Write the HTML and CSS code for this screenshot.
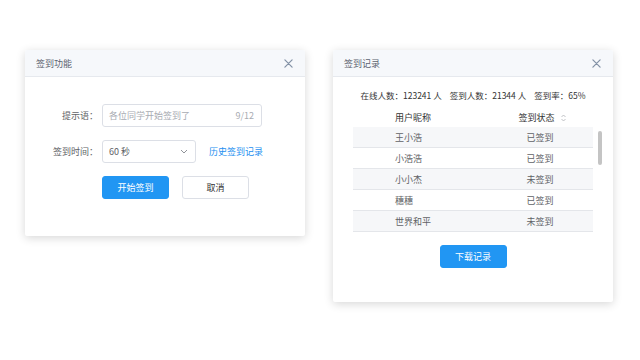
FILE: index.html
```html
<!DOCTYPE html>
<html lang="zh">
<head>
  <meta charset="UTF-8" />
  <title>签到</title>
  <link rel="stylesheet" href="styles.css">
</head>
<body>

  <div class="dialog dialog-sign">
    <div class="dialog-header">
      <span class="dialog-title">签到功能</span>
      <span class="dialog-close">
        <svg width="9" height="9" viewBox="0 0 10 10"><path d="M1 1L9 9M9 1L1 9" stroke="#8594a8" stroke-width="1.4" stroke-linecap="round"/></svg>
      </span>
    </div>
    <div class="dialog-body form">
      <div class="form-row">
        <label class="form-label">提示语：</label>
        <div class="input">
          <span class="placeholder">各位同学开始签到了</span>
          <span class="count">9/12</span>
        </div>
      </div>
      <div class="form-row">
        <label class="form-label">签到时间：</label>
        <div class="select">
          <span>60 秒</span>
          <svg width="8" height="5" viewBox="0 0 8 5"><path d="M1 1L4 4L7 1" fill="none" stroke="#909399" stroke-width="1"/></svg>
        </div>
        <a class="link">历史签到记录</a>
      </div>
      <div class="form-row buttons">
        <span class="form-label"></span>
        <button class="btn btn-primary">开始签到</button>
        <button class="btn btn-default">取消</button>
      </div>
    </div>
  </div>

  <div class="dialog dialog-record">
    <div class="dialog-header">
      <span class="dialog-title">签到记录</span>
      <span class="dialog-close">
        <svg width="9" height="9" viewBox="0 0 10 10"><path d="M1 1L9 9M9 1L1 9" stroke="#8594a8" stroke-width="1.4" stroke-linecap="round"/></svg>
      </span>
    </div>
    <div class="dialog-body record">
      <div class="stats">
        <span>在线人数：123241 人</span>
        <span>签到人数：21344 人</span>
        <span>签到率：65%</span>
      </div>
      <div class="table-wrap">
        <div class="table">
          <div class="tr th">
            <div class="td">用户昵称</div>
            <div class="td status">签到状态
              <svg class="sort" width="5" height="8" viewBox="0 0 5 8"><path d="M0.5 3L2.5 1L4.5 3M0.5 5L2.5 7L4.5 5" fill="none" stroke="#b0b3b8" stroke-width="0.8"/></svg>
            </div>
          </div>
          <div class="tr odd"><div class="td">王小浩</div><div class="td status">已签到</div></div>
          <div class="tr"><div class="td">小浩浩</div><div class="td status">已签到</div></div>
          <div class="tr odd"><div class="td">小小杰</div><div class="td status">未签到</div></div>
          <div class="tr"><div class="td">穗穗</div><div class="td status">已签到</div></div>
          <div class="tr odd"><div class="td">世界和平</div><div class="td status">未签到</div></div>
        </div>
        <div class="scrollbar"></div>
      </div>
      <div class="download">
        <button class="btn btn-primary">下载记录</button>
      </div>
    </div>
  </div>

</body>
</html>
```

FILE: styles.css
```css
html, body {
  margin: 0;
  padding: 0;
  height: 100%;
  background: #fff;
  font-family: "Noto Sans CJK SC", "Noto Sans", sans-serif;
  font-size: 9px;
  color: #606266;
}

body {
  display: flex;
  align-items: flex-start;
  gap: 28px;
  padding: 50px 0 0 25px;
  box-sizing: border-box;
}

.dialog {
  width: 280px;
  background: #fff;
  border-radius: 2px;
  box-shadow: 0 2px 10px rgba(0, 0, 0, 0.16);
  overflow: hidden;
}

.dialog-sign { height: 186px; }
.dialog-record { height: 252px; }

.dialog-header {
  height: 26px;
  display: flex;
  align-items: center;
  justify-content: space-between;
  padding: 0 12px 0 11px;
  background: #f6f8fb;
  border-bottom: 1px solid #e6e9ee;
}

.dialog-title {
  color: #5c6370;
  font-size: 9px;
}

.dialog-close {
  display: flex;
  align-items: center;
}

/* sign form */
.form {
  display: flex;
  flex-direction: column;
  gap: 13px;
  padding-top: 27px;
}

.form-row {
  display: flex;
  align-items: center;
}

.form-label {
  width: 73px;
  text-align: right;
  padding-right: 4px;
  color: #606266;
}

.input, .select {
  height: 23px;
  box-sizing: border-box;
  border: 1px solid #dcdfe6;
  border-radius: 3px;
  display: flex;
  align-items: center;
  justify-content: space-between;
  padding: 0 7px 0 6px;
}

.input { width: 160px; }
.select { width: 94px; color: #606266; }

.placeholder, .count { color: #a8abb2; }

.link {
  margin-left: 13px;
  color: #1d8ff0;
}

.buttons { gap: 13px; }
.buttons .form-label { margin-right: -13px; }

.btn {
  height: 23px;
  width: 67px;
  box-sizing: border-box;
  border-radius: 3px;
  font-family: inherit;
  font-size: 9px;
  padding: 0;
}

.btn-primary {
  background: #2196f3;
  border: 1px solid #2196f3;
  color: #fff;
}

.btn-default {
  background: #fff;
  border: 1px solid #dcdfe6;
  color: #333;
}

/* record */
.record {
  padding: 12px 20px 0;
}

.stats {
  display: flex;
  justify-content: center;
  gap: 8px;
  color: #333;
  font-size: 8.5px;
  height: 13px;
  line-height: 13px;
  white-space: nowrap;
}

.table-wrap {
  position: relative;
  margin-top: 6px;
}

.table {
  display: flex;
  flex-direction: column;
}

.tr {
  display: grid;
  grid-template-columns: 134px 1fr;
  height: 20px;
  align-items: center;
  border-bottom: 1px solid #e4e6ea;
}

.tr.th {
  height: 19px;
  border-bottom: none;
  color: #333;
}

.tr.odd { background: #f6f7f9; }

.td { padding-left: 42px; white-space: nowrap; }

.td.status {
  padding-left: 0;
  display: flex;
  justify-content: center;
  align-items: center;
  gap: 6px;
}

.th .td.status { padding-left: 4px; }

.scrollbar {
  position: absolute;
  right: -9px;
  top: 23px;
  width: 4px;
  height: 34px;
  border-radius: 2px;
  background: #c4c4c4;
}

.download {
  display: flex;
  justify-content: center;
  margin-top: 13px;
}
```
